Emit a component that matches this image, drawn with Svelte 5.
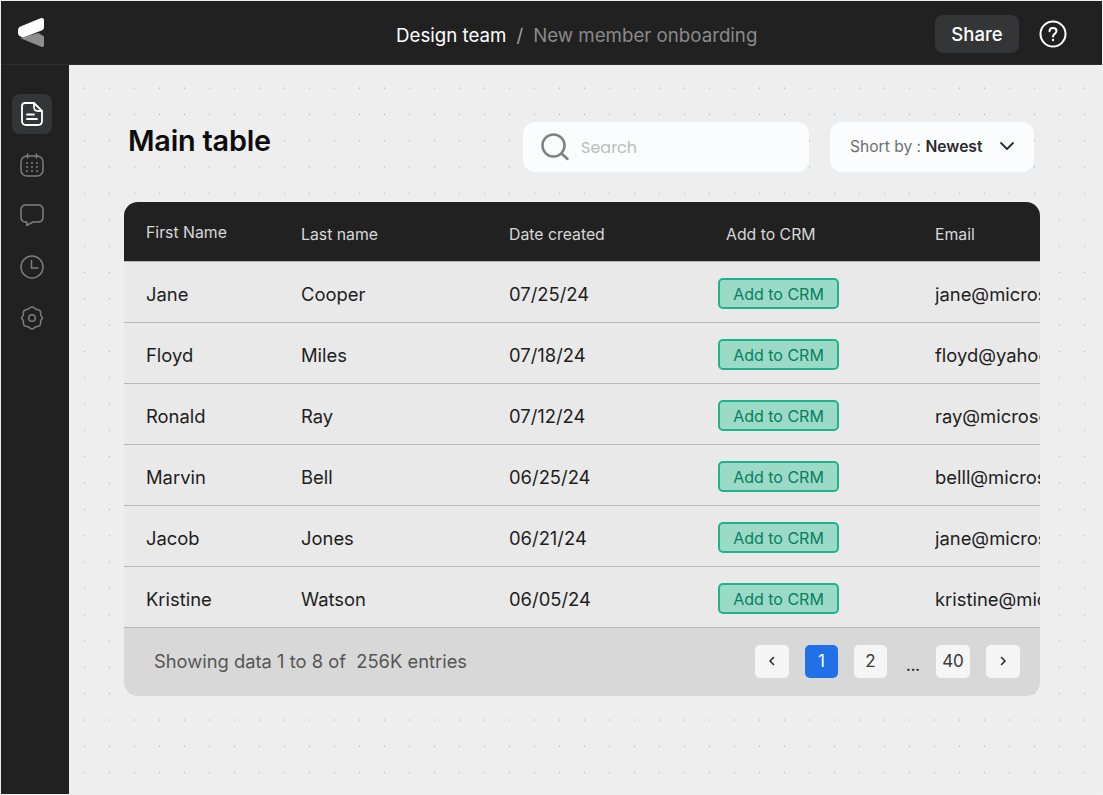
<script>
  const rows = [
    ['Jane', 'Cooper', '07/25/24', 'jane@microsoft.com'],
    ['Floyd', 'Miles', '07/18/24', 'floyd@yahoo.com'],
    ['Ronald', 'Ray', '07/12/24', 'ray@microsoft.com'],
    ['Marvin', 'Bell', '06/25/24', 'belll@microsoft.com'],
    ['Jacob', 'Jones', '06/21/24', 'jane@microsoft.com'],
    ['Kristine', 'Watson', '06/05/24', 'kristine@microsoft.com']
  ];
</script>

<div class="frame">
  <header class="topbar">
    <svg class="logo" width="30" height="32" viewBox="0 0 30 32">
      <path d="M4.500 10.500 24.500 2.200c1.800-.7 3.500.2 3.500 2V11c0 1.800-.8 3-2.500 3.600L9 21c-1.500.6-3 .5-4.500-.4C2.800 19.500 2 18.500 2 16.500V14c0-1.600 1-2.800 2.500-3.500Z" fill="#fff"/>
      <path d="M4 22 22.500 17c1.500 1 3.800 2.300 5.500 3.500V29c0 1.800-1.300 2.500-2.800 1.800Z" fill="#8e8e8e"/>
    </svg>
    <div class="crumbs"><span class="team">Design team</span><span class="slash">/</span><span class="page">New member onboarding</span></div>
    <div class="actions">
      <button class="share">Share</button>
      <svg width="28" height="28" viewBox="0 0 28 28" fill="none" stroke="#fff" stroke-width="2">
        <circle cx="14" cy="14" r="12.500"/>
        <path d="M10.500 11.200c0-2 1.500-3.300 3.500-3.300s3.500 1.300 3.500 3.200c0 2.800-3.500 2.800-3.500 5.400" stroke-linecap="round"/>
        <circle cx="14" cy="20" r="1.200" fill="#fff" stroke="none"/>
      </svg>
    </div>
  </header>
  <div class="body">
    <nav class="side">
      <div class="nav active">
        <svg width="24" height="26" viewBox="0 0 24 26" fill="none" stroke="#fff" stroke-width="1.800" stroke-linejoin="round" stroke-linecap="round">
          <path d="M5 2h9l8 8v10c0 2.500-1.500 4-4 4H6c-2.500 0-4-1.500-4-4V5c0-2 1.200-3 3-3Z"/><path d="M14 2v4c0 2.500 1.500 4 4 4h4"/><path d="M7 13.500h7M7 18h10"/>
        </svg>
      </div>
      <div class="nav">
        <svg width="24" height="24" viewBox="0 0 24 24" fill="none" stroke="#7d7d7d" stroke-width="1.500" stroke-linecap="round">
          <rect x="1" y="3" width="22" height="20" rx="6"/><path d="M7.500 1v4M16.500 1v4"/>
          <g stroke-width="2"><path d="M7 10h0M12 10h0M17 10h0M7 14h0M12 14h0M17 14h0M7 18h0M12 18h0M17 18h0"/></g>
        </svg>
      </div>
      <div class="nav">
        <svg width="24" height="24" viewBox="0 0 24 24" fill="none" stroke="#7d7d7d" stroke-width="1.500" stroke-linejoin="round">
          <path d="M6 1h12c3 0 5 2 5 5v7c0 3-2 5-5 5h-5l-6.500 3.500.5-3.500H6c-3 0-5-2-5-5V6c0-3 2-5 5-5Z"/>
        </svg>
      </div>
      <div class="nav">
        <svg width="24" height="24" viewBox="0 0 24 24" fill="none" stroke="#7d7d7d" stroke-width="1.500" stroke-linecap="round">
          <circle cx="12" cy="12" r="11"/><path d="M11.500 5.500V13H18"/>
        </svg>
      </div>
      <div class="nav">
        <svg width="24" height="24" viewBox="0 0 24 24" fill="none" stroke="#7d7d7d" stroke-width="1.500" stroke-linejoin="round">
          <path d="M12 1c1.300 0 2.300 1 3.500 1.800 1.400.9 3.500.7 4.500 2 1 1.400.4 3.200.8 4.700.3 1 1.700 1.400 1.700 2.500s-1.400 1.500-1.700 2.500c-.4 1.500.2 3.300-.8 4.700-1 1.300-3 1-4.500 1.800-1.200.7-2.200 2-3.500 2s-2.300-1.300-3.500-2c-1.500-.8-3.500-.5-4.500-1.800-1-1.400-.4-3.200-.8-4.700-.3-1-1.700-1.400-1.700-2.500s1.400-1.500 1.700-2.500c.4-1.500-.2-3.300.8-4.700 1-1.300 3.100-1.100 4.500-2C9.700 2 10.700 1 12 1Z"/>
          <circle cx="12" cy="12" r="3.300"/>
        </svg>
      </div>
    </nav>
    <main class="main">
      <div class="head">
        <h1>Main table</h1>
        <div class="search">
          <svg width="30" height="30" viewBox="0 0 30 30" fill="none" stroke="#808080" stroke-width="2.500" stroke-linecap="round">
            <circle cx="13.500" cy="13.500" r="11"/><path d="m22 22 5.500 5"/>
          </svg>
          <span>Search</span>
        </div>
        <div class="sort">
          <span class="label">Short by : <b>Newest</b></span>
          <svg width="16" height="10" viewBox="0 0 16 10" fill="none" stroke="#2c2c2c" stroke-width="1.800" stroke-linecap="round" stroke-linejoin="round"><path d="m2 2 6 6 6-6"/></svg>
        </div>
      </div>
      <section class="table">
        <div class="row hdr">
          <span class="c1">First Name</span><span>Last name</span><span>Date created</span><span class="c4">Add to CRM</span><span>Email</span>
        </div>
        {#each rows as r}
          <div class="row">
            <span>{r[0]}</span><span>{r[1]}</span><span>{r[2]}</span>
            <span><button class="crm">Add to CRM</button></span>
            <span class="email">{r[3]}</span>
          </div>
        {/each}
        <footer class="foot">
          <span class="showing">Showing data 1 to 8 of &nbsp;256K entries</span>
          <div class="pages">
            <button class="pg arrow"><svg width="8" height="10" viewBox="0 0 8 10" fill="none" stroke="#2c2c2c" stroke-width="1.600" stroke-linecap="round" stroke-linejoin="round"><path d="M5.500 1.500 2 5l3.500 3.500"/></svg></button>
            <button class="pg cur">1</button>
            <button class="pg two">2</button>
            <span class="dots">...</span>
            <button class="pg forty">40</button>
            <button class="pg arrow"><svg width="8" height="10" viewBox="0 0 8 10" fill="none" stroke="#2c2c2c" stroke-width="1.600" stroke-linecap="round" stroke-linejoin="round"><path d="M2.500 1.500 6 5 2.500 8.500"/></svg></button>
          </div>
        </footer>
      </section>
    </main>
  </div>
</div>

<style>
  :global(body) { margin: 0; font-family: Inter, "Liberation Sans", sans-serif; background: #eee; }
  .frame { width: 1103px; height: 795px; box-sizing: border-box; border: 1px solid #efefef; display: flex; flex-direction: column; overflow: hidden; background: #eee; }
  .topbar { height: 64px; flex: none; background: #212121; border-bottom: 1px solid #2f2f2f; box-sizing: border-box; padding-top: 3px; display: flex; align-items: center; position: relative; }
  .logo { margin-left: 15px; margin-top: -4px; }
  .crumbs { position: absolute; left: 395px; top: 24px; font-size: 18.700px; line-height: 22px; white-space: nowrap; }
  .team { color: #fff; }
  .slash { color: #a0a0a0; margin: 0 10px; }
  .page { color: #8a8a8a; }
  .actions { margin-left: auto; display: flex; align-items: center; gap: 20px; margin-right: 35px; }
  .share { width: 84px; height: 38px; background: #343537; color: #fff; border: 0; border-radius: 8px; font: 500 18.500px Inter, sans-serif; padding: 0; }
  .body { flex: 1; display: flex; min-height: 0; }
  .side { width: 68px; flex: none; background: #212121; display: flex; flex-direction: column; align-items: flex-start; padding: 29px 0 0 10.500px; box-sizing: border-box; }
  .nav { width: 40px; height: 40px; margin-bottom: 11px; display: flex; align-items: center; justify-content: center; border-radius: 8px; }
  .active { background: #343537; }
  .main { flex: 1; padding: 57px 0 0 55px; background-color: #eee; background-image: radial-gradient(circle, #b0b0b0 0.8px, transparent 1px); background-size: 25px 26.330px; background-position: 3px 10px; }
  .head { display: flex; align-items: flex-start; height: 80px; }
  h1 { margin: 0; width: 399px; padding: 1px 0 0 4px; box-sizing: border-box; font-size: 28.800px; line-height: 36px; font-weight: 600; color: #0c0c0c; letter-spacing: -0.2px; }
  .search { width: 286px; height: 50px; background: #fbfcfe; border-radius: 12px; display: flex; align-items: center; padding-left: 17px; box-sizing: border-box; gap: 11px; color: #bdbdbd; font: 400 16px Poppins, "Open Sans", sans-serif; }
  .sort { width: 204px; height: 50px; margin-left: 21px; background: #fbfcfe; border-radius: 12px; display: flex; align-items: center; padding: 0 19px 2px 20px; box-sizing: border-box; justify-content: space-between; font-size: 15.600px; color: #6f6f6f; }
  .sort b { font-weight: 600; color: #2a2a2a; }
  .table { width: 916px; height: 494px; border-radius: 14px; overflow: hidden; background: #e9e9e9; display: flex; flex-direction: column; }
  .row { display: grid; grid-template-columns: 155px 208px 209px 217px 1fr; padding: 3px 0 0 22px; height: 61px; box-sizing: border-box; align-items: center; border-bottom: 1px solid #b8b8b8; font-size: 18.400px; color: #1e1e1e; white-space: nowrap; }
  .hdr { height: 60px; background: #212121; color: #d8d8d8; font-size: 15.800px; padding-top: 5px; }
  .hdr .c1 { margin-top: -3px; }
  .c4 { padding-left: 8px; }
  .email { overflow: hidden; }
  .crm { width: 121px; height: 31px; display: block; margin-top: 0; border-radius: 5px; border: 2px solid #1fb38d; background: #9bdac6; color: #058060; font: 400 16px Inter, sans-serif; padding: 0; }
  .foot { flex: 1; background: #d8d8d8; display: flex; align-items: center; justify-content: space-between; padding: 0 20px 2px 30px; }
  .showing { font-size: 18.350px; color: #555; }
  .pages { display: flex; align-items: center; }
  .pg { height: 33px; border: 0; border-radius: 5px; background: #f5f5f5; color: #3a3a3a; font: 400 17px Inter, sans-serif; padding: 0; display: flex; align-items: center; justify-content: center; }
  .arrow { width: 34px; }
  .cur { width: 33px; margin-left: 16px; background: #2270e8; color: #fff; }
  .two { width: 33px; margin-left: 16px; }
  .dots { width: 49px; text-align: center; font-size: 14px; font-weight: 700; color: #222; padding: 8px 0 0 3px; box-sizing: border-box; }
  .forty { width: 34px; margin-right: 16px; }
</style>
